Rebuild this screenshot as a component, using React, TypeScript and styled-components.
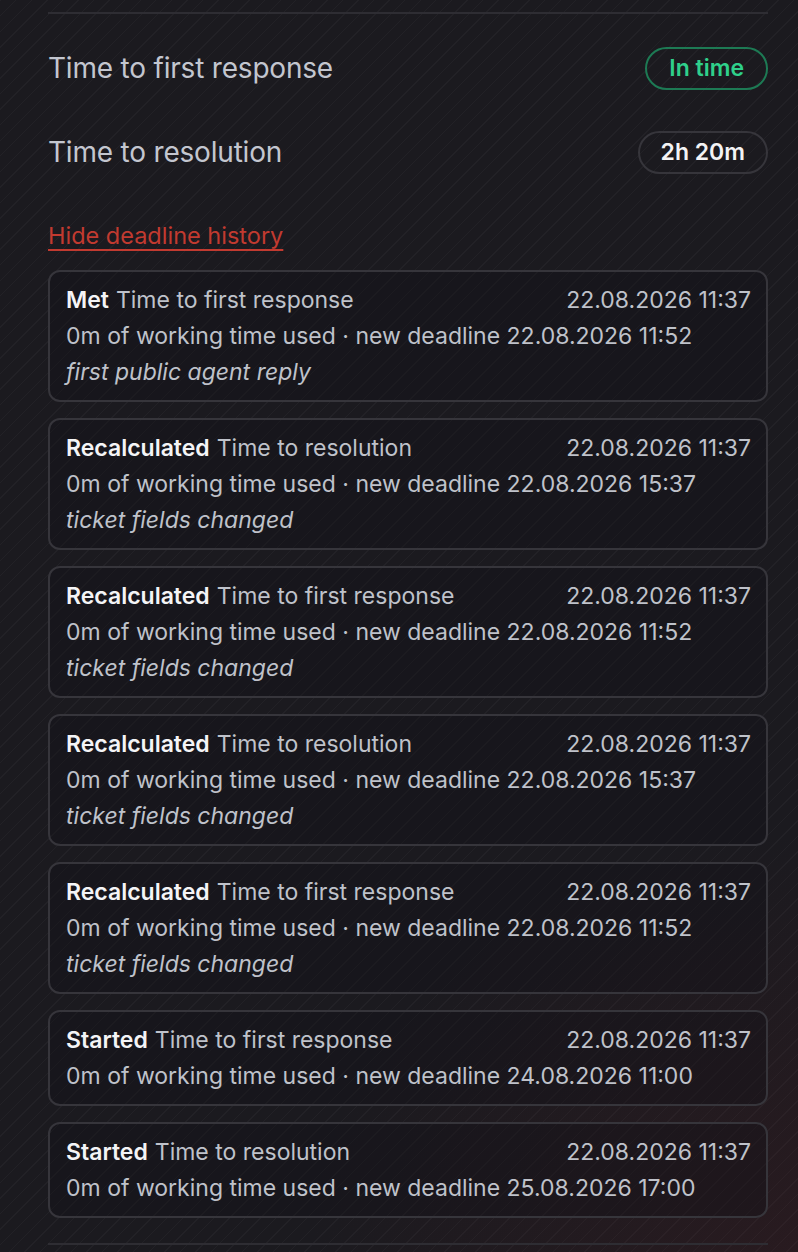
import styled, { createGlobalStyle } from "styled-components";

const GlobalStyle = createGlobalStyle`
  html, body {
    margin: 0;
    padding: 0;
    background: #1b1a1f;
  }
  body {
    font-family: "Inter", "Noto Sans", sans-serif;
    min-height: 1252px;
    background-color: #1b1a1f;
    background-image:
      radial-gradient(ellipse 700px 600px at 100% 100%, rgba(110, 30, 35, 0.16), rgba(110, 30, 35, 0) 70%),
      repeating-linear-gradient(135deg, rgba(255, 255, 255, 0.03) 0 1px, rgba(255, 255, 255, 0) 1px 11px);
  }
`;

const Page = styled.div`
  padding: 12px 30px 8px 48px;
  display: flex;
  flex-direction: column;
`;

const Rule = styled.hr`
  margin: 0;
  border: 0;
  border-top: 2px solid #2e2d33;
`;

const Metric = styled.div`
  display: flex;
  align-items: center;
  justify-content: space-between;
  height: 84px;
`;

const MetricLabel = styled.span`
  font-size: 28px;
  color: #c3c6cf;
  letter-spacing: -0.2px;
`;

const Pill = styled.span<{ $tone: "good" | "neutral" }>`
  display: inline-flex;
  align-items: center;
  height: 39px;
  padding: 0 ${(p) => (p.$tone === "good" ? 22 : 21)}px;
  border-radius: 22px;
  font-size: 23px;
  font-weight: 600;
  border: 2px solid ${(p) => (p.$tone === "good" ? "#1d7a54" : "#36353b")};
  color: ${(p) => (p.$tone === "good" ? "#2fd08b" : "#f3f3f5")};
`;

const HistoryToggle = styled.a`
  margin: 28px 0 20px;
  font-size: 23.5px;
  color: #c23a30;
  text-decoration: underline;
  text-underline-offset: 5px;
  text-decoration-thickness: 2px;
  cursor: pointer;
  line-height: 28px;
`;

const EventList = styled.div`
  display: flex;
  flex-direction: column;
  gap: 16px;
  margin-bottom: 25px;
`;

const EventCard = styled.div`
  border: 2px solid #36353b;
  border-radius: 12px;
  padding: 10px 15px 10px 16px;
  background: rgba(18, 17, 22, 0.35);
`;

const EventHead = styled.div`
  display: flex;
  justify-content: space-between;
  line-height: 36px;
  font-size: 23px;
  color: #bfc2ca;
`;

const Kind = styled.strong`
  color: #f4f4f6;
  font-weight: 600;
  margin-right: 7px;
`;

const EventLine = styled.div<{ $italic?: boolean }>`
  line-height: 36px;
  font-size: 23px;
  color: #bfc2ca;
  font-style: ${(p) => (p.$italic ? "italic" : "normal")};
`;

type HistoryEvent = {
  kind: string;
  metric: string;
  at: string;
  deadline: string;
  reason?: string;
};

const events: HistoryEvent[] = [
  { kind: "Met", metric: "Time to first response", at: "22.08.2026 11:37", deadline: "22.08.2026 11:52", reason: "first public agent reply" },
  { kind: "Recalculated", metric: "Time to resolution", at: "22.08.2026 11:37", deadline: "22.08.2026 15:37", reason: "ticket fields changed" },
  { kind: "Recalculated", metric: "Time to first response", at: "22.08.2026 11:37", deadline: "22.08.2026 11:52", reason: "ticket fields changed" },
  { kind: "Recalculated", metric: "Time to resolution", at: "22.08.2026 11:37", deadline: "22.08.2026 15:37", reason: "ticket fields changed" },
  { kind: "Recalculated", metric: "Time to first response", at: "22.08.2026 11:37", deadline: "22.08.2026 11:52", reason: "ticket fields changed" },
  { kind: "Started", metric: "Time to first response", at: "22.08.2026 11:37", deadline: "24.08.2026 11:00" },
  { kind: "Started", metric: "Time to resolution", at: "22.08.2026 11:37", deadline: "25.08.2026 17:00" },
];

export default function App() {
  return (
    <>
      <GlobalStyle />
      <Page>
        <Rule />
        <Metric style={{ marginTop: 12 }}>
          <MetricLabel>Time to first response</MetricLabel>
          <Pill $tone="good">In time</Pill>
        </Metric>
        <Metric>
          <MetricLabel>Time to resolution</MetricLabel>
          <Pill $tone="neutral">2h 20m</Pill>
        </Metric>
        <HistoryToggle>Hide deadline history</HistoryToggle>
        <EventList>
          {events.map((e, i) => (
            <EventCard key={i}>
              <EventHead>
                <span>
                  <Kind>{e.kind}</Kind>
                  {e.metric}
                </span>
                <span>{e.at}</span>
              </EventHead>
              <EventLine>0m of working time used · new deadline {e.deadline}</EventLine>
              {e.reason && <EventLine $italic>{e.reason}</EventLine>}
            </EventCard>
          ))}
        </EventList>
        <Rule />
      </Page>
    </>
  );
}
